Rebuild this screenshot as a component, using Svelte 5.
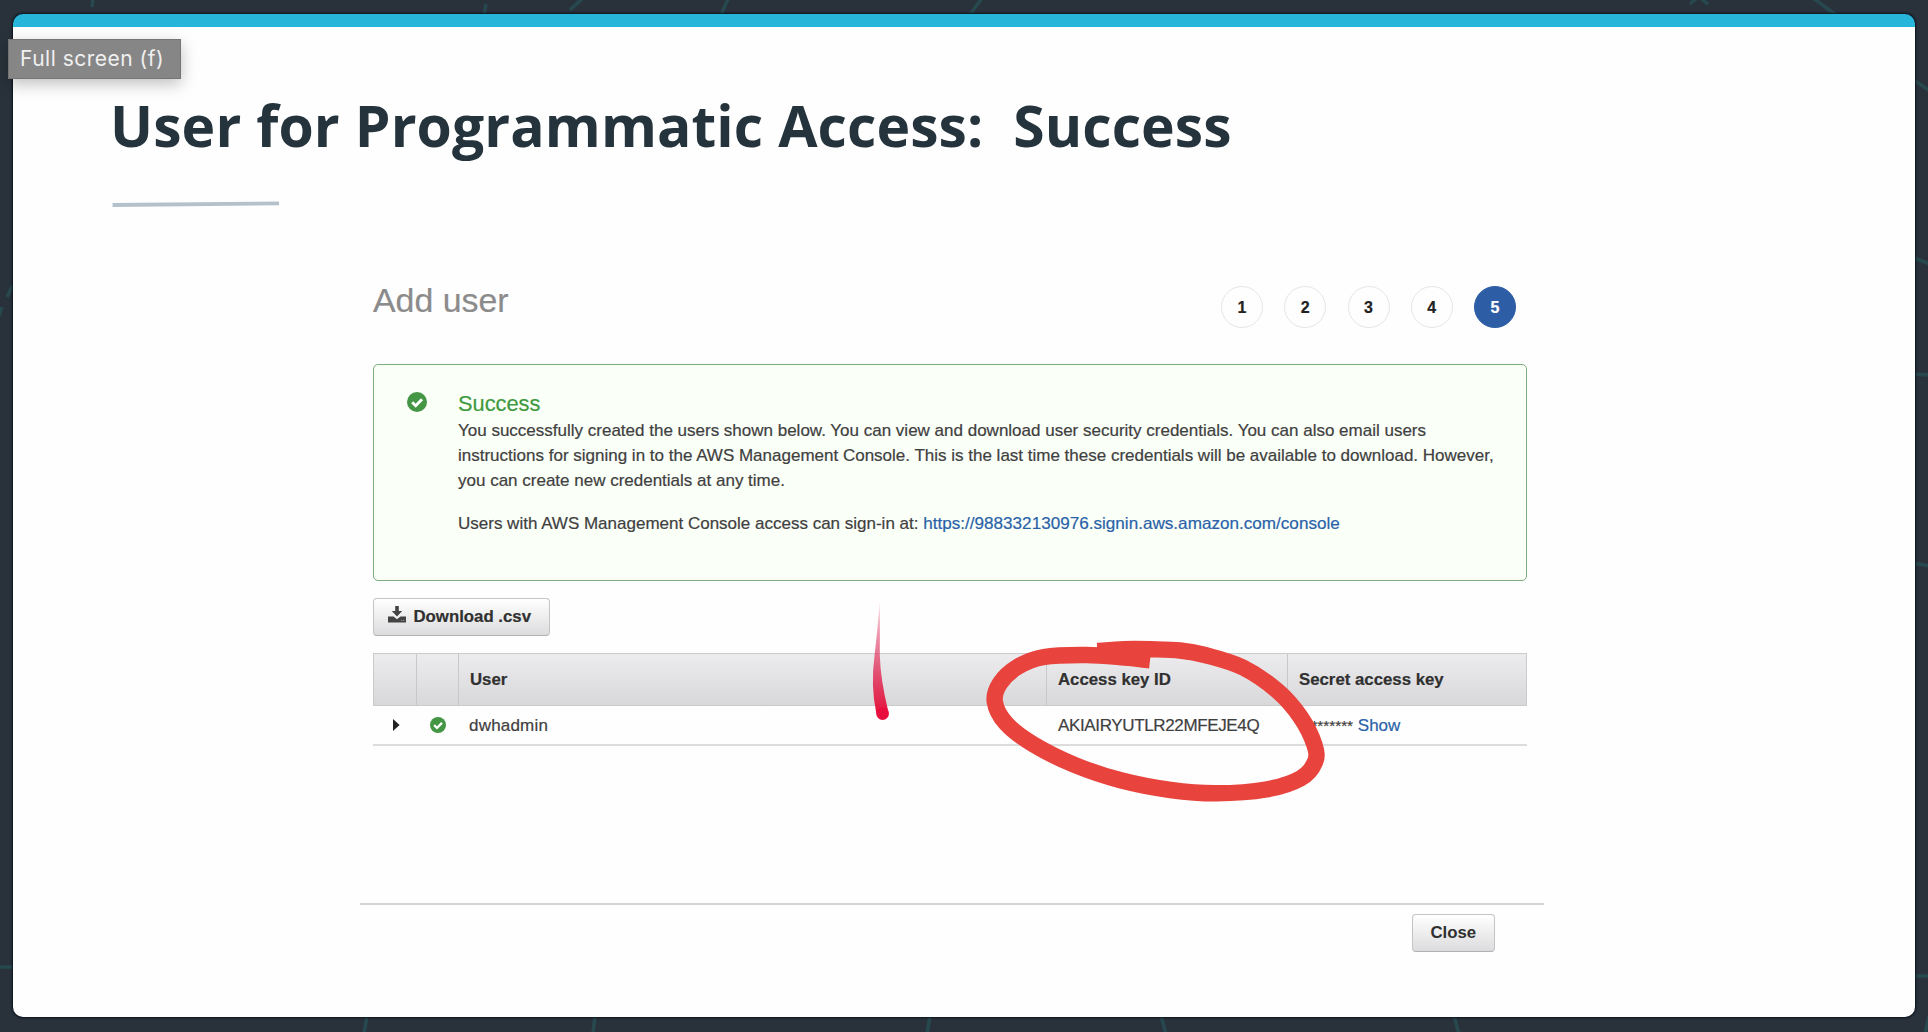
<script>
  const steps = [1, 2, 3, 4, 5];
  const current = 5;

  // Fragments of the network pattern visible around the slide
  const webLines = [
    [93, -2, 92, 7], [486, 4, 484, 15], [583, -2, 570, 10], [728, -1, 721, 15],
    [982, -2, 969, 16], [1698, -3, 1690, 4], [1699, -3, 1708, 4], [1813, -2, 1836, 15],
    [1912, 79, 1930, 91], [1912, 257, 1930, 264], [1912, 374, 1930, 375],
    [1912, 563, 1930, 566], [1912, 976, 1930, 976], [-1, 967, 14, 967],
    [13, 285, 7, 297], [2, 307, -2, 318], [367, 1016, 364, 1034], [595, 1016, 593, 1034],
    [930, 1016, 927, 1034], [1161, 1016, 1166, 1034], [1454, 1016, 1459, 1034],
    [1929, 1016, 1925, 1034]
  ];

  // Freehand marker loop around the access key
  const loop = [
    [1097.4, 651], [1124, 649.2], [1151.4, 649.3], [1180, 650.5], [1205, 655], [1243, 667.5],
    [1277.6, 691], [1300.5, 717], [1314.5, 745], [1315, 762], [1300.6, 778.3], [1266, 789.5],
    [1216.4, 793.3], [1170.5, 790], [1120.7, 780.3], [1074.8, 765], [1032.7, 744],
    [1006, 723.3], [994.8, 701.7], [1000, 683.3], [1017.4, 667], [1044, 657],
    [1086.3, 655], [1124.6, 657.6], [1150, 660.3]
  ];

  function smooth(p) {
    let d = `M${p[0][0]} ${p[0][1]}`;
    for (let i = 0; i < p.length - 1; i++) {
      const a = p[i - 1] ?? p[i], b = p[i], c = p[i + 1], e = p[i + 2] ?? c;
      d += `C${b[0] + (c[0] - a[0]) / 6} ${b[1] + (c[1] - a[1]) / 6} ${c[0] - (e[0] - b[0]) / 6} ${c[1] - (e[1] - b[1]) / 6} ${c[0]} ${c[1]}`;
    }
    return d;
  }
</script>

{#snippet check(size)}
  <svg width={size} height={size} viewBox="0 0 20 20">
    <circle cx="10" cy="10" r="10" fill="#449644" />
    <path d="M5.2 10.2 8.7 13.7 15 7.3" fill="none" stroke="#fff" stroke-width="2.9" />
  </svg>
{/snippet}

<div class="stage">
  <svg class="web" viewBox="0 0 1928 1032">
    {#each webLines as [x1, y1, x2, y2]}
      <line {x1} {y1} {x2} {y2} />
    {/each}
  </svg>

  <main class="slide">
    <h1>User for Programmatic Access:&nbsp; Success</h1>
    <svg class="rule" width="168" height="8" viewBox="0 0 168 8">
      <path d="M.6 4 167 2.3" stroke="#b4c1cb" stroke-width="3.8" />
    </svg>

    <section class="console">
      <header>
        <h2>Add user</h2>
        <ol>
          {#each steps as n}
            <li class:current={n === current}>{n}</li>
          {/each}
        </ol>
      </header>

      <div class="alert">
        <span class="alert-icon">{@render check(20)}</span>
        <div class="alert-body">
          <h3>Success</h3>
          <p>
            You successfully created the users shown below. You can view and download user security credentials. You can also email users<br />
            instructions for signing in to the AWS Management Console. This is the last time these credentials will be available to download. However,<br />
            you can create new credentials at any time.
          </p>
          <p>Users with AWS Management Console access can sign-in at: <span class="link url">https://988332130976.signin.aws.amazon.com/console</span></p>
        </div>
      </div>

      <button class="download">
        <svg width="18" height="17" viewBox="0 0 18 17">
          <path d="M7.2 0h3.6v5h3.4L9 10.4 3.8 5h3.4z" fill="#444" />
          <path d="M0 10.5h5.5L9 13.2l3.5-2.7H18V16.5H0z" fill="#444" />
          <path d="M13 14.4h1.2M15.2 14.4h1.2" stroke="#999" stroke-width="1" />
        </svg>
        <span>Download .csv</span>
      </button>

      <div class="table">
        <div class="row head">
          <span></span><span></span><span>User</span><span>Access key ID</span><span>Secret access key</span>
        </div>
        <div class="row data">
          <span class="caret"><svg width="7" height="12" viewBox="0 0 7 12"><path d="M0 0 6.6 6 0 12z" fill="#222" /></svg></span>
          <span class="status">{@render check(16)}</span>
          <span class="name">dwhadmin</span>
          <span class="key">AKIAIRYUTLR22MFEJE4Q</span>
          <span class="secret"><span class="mask">*********</span> <span class="link">Show</span></span>
        </div>
      </div>
    </section>

    <footer><button>Close</button></footer>
  </main>

  <svg class="ink" viewBox="0 0 1928 1032">
    <defs>
      <linearGradient id="trail" gradientUnits="userSpaceOnUse" x1="0" y1="600" x2="0" y2="712">
        <stop offset="0" stop-color="#e2244f" stop-opacity="0.1" />
        <stop offset=".35" stop-color="#e0406a" stop-opacity="0.6" />
        <stop offset=".75" stop-color="#e22c55" stop-opacity="0.9" />
        <stop offset="1" stop-color="#e4163f" />
      </linearGradient>
    </defs>
    <path d={smooth(loop)} fill="none" stroke="#e8433d" stroke-width="16.4" />
    <path d="M879.8 601Q877.5 630 874.6 655Q870.5 685 876.2 713L888 710Q880.5 680 879.8 655Q880 630 879.8 601Z" fill="url(#trail)" />
    <circle cx="882.6" cy="713.5" r="6.4" fill="#e80f3f" />
  </svg>

  <div class="tooltip">Full screen (f)</div>
</div>

<style>
  :global(body) { margin: 0; background: #29323b; }
  .stage {
    position: relative;
    box-sizing: border-box;
    width: 1928px;
    height: 1032px;
    padding: 14px 13.5px 15px 13px;
    overflow: hidden;
    background: #29323b;
    font-family: "Liberation Sans", Arial, sans-serif;
    color: #3f4040;
  }
  .web, .ink { position: absolute; inset: 0; width: 1928px; height: 1032px; pointer-events: none; }
  .web line { stroke: #27484f; stroke-width: 3.6; }
  .slide {
    position: relative;
    box-sizing: border-box;
    height: 1003px;
    padding-top: 60px;
    background: #fefefe;
    border-top: 13px solid #28b5da;
    border-radius: 10px;
    box-shadow: 0 0 2px 1px #0b121b;
  }
  h1, h2, h3, p, ol { margin: 0; padding: 0; font-weight: 400; }
  h1 {
    margin-left: 97px;
    font: 700 57px/76px "Open Sans", sans-serif;
    letter-spacing: 0.1px;
    color: #24333c;
    white-space: nowrap;
  }
  .rule { display: block; margin: 38px 0 0 99px; }
  .console { width: 1154px; margin: 76.5px 0 0 360px; -webkit-text-stroke: 0.2px currentColor; }
  header { display: flex; justify-content: space-between; height: 42px; padding-right: 11px; }
  h2 { font-size: 33.9px; line-height: 29px; color: #8b8b8b; white-space: nowrap; }
  ol { display: flex; gap: 21.25px; list-style: none; }
  li {
    box-sizing: border-box;
    width: 42px;
    height: 42px;
    border: 1.5px solid #e6e6e6;
    border-radius: 50%;
    font-weight: 700;
    font-size: 16px;
    line-height: 42px;
    text-align: center;
    color: #222;
  }
  li.current { background: #2c5da5; border-color: #2c5da5; color: #fff; }
  .alert {
    box-sizing: border-box;
    display: flex;
    height: 217px;
    margin-top: 36px;
    padding: 26px 0 0 33px;
    border: 1.5px solid #7cab7c;
    border-radius: 5px;
    background: #fafff8;
  }
  .alert-icon { width: 51px; padding-top: 1px; }
  .alert svg, .row svg { display: block; }
  .alert-body { white-space: nowrap; font-size: 17.01px; line-height: 25.3px; }
  h3 { margin-bottom: 1.2px; font-size: 21.8px; line-height: 26px; color: #3f9a3f; }
  p + p { margin-top: 17.5px; }
  .link { color: #2a62a8; }
  .url { font-size: 17.12px; }
  button {
    box-sizing: border-box;
    display: flex;
    align-items: center;
    justify-content: center;
    height: 37.5px;
    border: 1.5px solid #c4c4c4;
    border-bottom-color: #b0b0b0;
    border-radius: 4px;
    background: linear-gradient(#fff, #dcdcde);
    font: 700 16.8px/20px "Liberation Sans", Arial, sans-serif;
    color: #303030;
  }
  button { padding: 1px 0 0; }
  .download { width: 177px; margin-top: 17.5px; padding: 1px 4px 0 0; gap: 7.5px; }
  .download svg { margin-top: -5px; }
  .table { margin-top: 17.5px; white-space: nowrap; font-size: 17px; }
  .row { display: grid; grid-template-columns: 41.5px 42px 588px 241px 1fr; }
  .head {
    box-sizing: border-box;
    height: 52.5px;
    border: 1.5px solid #cbcbcb;
    background: linear-gradient(#ececee, #d8d8da);
    font-weight: 700;
    font-size: 16.8px;
    line-height: 52px;
    color: #303030;
  }
  .head span { padding-left: 11.5px; border-left: 1.5px solid #c8c8c8; }
  .head span:first-child { border-left: 0; }
  .data { height: 38.5px; border-bottom: 2px solid #dcdcdc; line-height: 39px; }
  .caret { padding: 13px 0 0 19.5px; }
  .status { padding: 11px 0 0 15px; }
  .name { padding-left: 12.5px; letter-spacing: 0.2px; }
  .key { padding-left: 13.5px; letter-spacing: -0.36px; }
  .secret { padding-left: 14px; }
  .mask { font-size: 15.3px; }
  footer {
    display: flex;
    justify-content: flex-end;
    width: 1184px;
    box-sizing: border-box;
    margin: 157px 0 0 347px;
    padding: 9px 49px 0 0;
    border-top: 2px solid #d4d4d4;
  }
  footer button { width: 83.5px; }
  .tooltip {
    position: absolute;
    left: 8px;
    top: 39px;
    box-sizing: border-box;
    width: 173px;
    height: 40px;
    padding-left: 11px;
    border: 1px solid #757575;
    background: #868686;
    box-shadow: 0 5px 16px rgba(0, 0, 0, 0.25);
    font: 400 21px/38px Inter, sans-serif;
    letter-spacing: 0.5px;
    color: #f0f0f0;
    white-space: nowrap;
  }
</style>
